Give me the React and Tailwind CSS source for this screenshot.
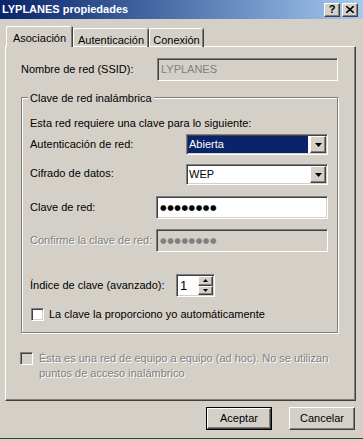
const raised =
  "border border-t-white border-l-white border-r-[#404040] border-b-[#404040] shadow-[inset_-1px_-1px_0_#808080]";
const sunken =
  "border border-t-[#808080] border-l-[#808080] border-r-white border-b-white shadow-[inset_1px_1px_0_#404040,inset_-1px_-1px_0_#d4d0c8]";
const etched = "border border-[#808080] shadow-[inset_1px_1px_0_white,1px_1px_0_white]";
const disabledText = "text-[#808080] [text-shadow:1px_1px_0_white]";

const DownArrow = () => (
  <svg width="7" height="4" viewBox="0 0 7 4">
    <path d="M0 0h7L3.5 4z" fill="black" />
  </svg>
);

const Combo = ({ value, selected }) => (
  <div className={`flex h-[21px] w-[142px] items-stretch bg-white ${sunken}`}>
    <div className="flex flex-1 items-center p-[1px]">
      <span
        className={`flex h-full w-full items-center px-[1px] ${
          selected ? "bg-[#0a246a] text-white" : "text-black"
        }`}
      >
        {value}
      </span>
    </div>
    <div className={`m-[1px] flex w-[16px] items-center justify-center bg-[#d4d0c8] ${raised}`}>
      <DownArrow />
    </div>
  </div>
);

const Field = ({ children, disabled, width = "w-[172px]" }) => (
  <div
    className={`flex h-[23px] ${width} items-center px-[3px] ${sunken} ${
      disabled ? "bg-[#d4d0c8] text-[#808080]" : "bg-white text-black"
    }`}
  >
    {children}
  </div>
);

const Dots = ({ light }) => (
  <span
    className={`text-[7.5px] tracking-[0.6px] font-['DejaVu_Sans',sans-serif] ${
      light ? "text-[#808080]" : "text-black"
    }`}
  >
    ●●●●●●●●
  </span>
);

const Checkbox = ({ disabled }) => (
  <div
    className={`h-[13px] w-[13px] shrink-0 ${sunken} ${disabled ? "bg-[#d4d0c8]" : "bg-white"}`}
  />
);

const Button = ({ children, isDefault }) =>
  isDefault ? (
    <div className="h-[23px] w-[66px] border border-black">
      <div className={`flex h-full w-full items-center justify-center bg-[#d4d0c8] ${raised}`}>
        {children}
      </div>
    </div>
  ) : (
    <div className={`flex h-[23px] w-[66px] items-center justify-center bg-[#d4d0c8] ${raised}`}>
      {children}
    </div>
  );

const CaptionButton = ({ children }) => (
  <div
    className={`flex h-[14px] w-[16px] items-center justify-center bg-[#d4d0c8] text-[11px] font-bold leading-none text-black ${raised}`}
  >
    {children}
  </div>
);

export default function App() {
  return (
    <div className="relative h-[441px] w-[363px] overflow-hidden bg-[#d4d0c8] font-['Liberation_Sans',Arial,sans-serif] text-[11px] text-black">
      {/* title bar */}
      <div className="flex h-[19px] items-center justify-between bg-gradient-to-r from-[#0a246a] to-[#a6caf0] pl-[2px] pr-[5px]">
        <span className="text-[11px] font-bold text-white">LYPLANES propiedades</span>
        <div className="flex gap-[2px]">
          <CaptionButton>?</CaptionButton>
          <CaptionButton>
            <svg width="8" height="7" viewBox="0 0 8 7">
              <path d="M0 0l8 7M8 0L0 7" stroke="black" strokeWidth="1.6" />
            </svg>
          </CaptionButton>
        </div>
      </div>

      {/* tabs */}
      <div className="relative z-10 ml-[6px] mt-[7px] flex h-[21px] items-end">
        <div className="flex h-[21px] w-[66px] items-start justify-center rounded-t-[2px] border-l border-t border-white bg-[#d4d0c8] pt-[3px] shadow-[inset_-1px_0_0_#808080,1px_0_0_#404040]">
          Asociación
        </div>
        <div className="ml-[1px] flex h-[19px] w-[75px] items-start justify-center rounded-t-[2px] border-l border-t border-white pt-[3px] shadow-[inset_-1px_0_0_#808080,1px_0_0_#404040]">
          Autenticación
        </div>
        <div className="ml-[1px] flex h-[19px] w-[54px] items-start justify-center rounded-t-[2px] border-l border-t border-white pt-[3px] shadow-[inset_-1px_0_0_#808080,1px_0_0_#404040]">
          Conexión
        </div>
      </div>

      {/* panel */}
      <div className="-mt-[1px] ml-[5px] h-[355px] w-[351px] border-l border-t border-white border-r border-b border-r-[#404040] border-b-[#404040] shadow-[inset_-1px_-1px_0_#808080]">
        <div className="ml-[15px] mt-[11px] flex h-[23px] items-center">
          <span className="w-[136px]">Nombre de red (SSID):</span>
          <Field disabled width="w-[181px]">
            <span className="text-[#808080]">LYPLANES</span>
          </Field>
        </div>

        <div className={`relative ml-[15px] mt-[16px] h-[236px] w-[317px] ${etched}`}>
          <span className="absolute -top-[8px] left-[6px] bg-[#d4d0c8] px-[2px]">
            Clave de red inalámbrica
          </span>
          <div className="pl-[8px] pr-[8px]">
            <div className="mt-[17px] h-[14px]">Esta red requiere una clave para lo siguiente:</div>
            <div className="mt-[5px] flex h-[21px] items-center">
              <span className="w-[156px]">Autenticación de red:</span>
              <Combo value="Abierta" selected />
            </div>
            <div className="mt-[9px] flex h-[21px] items-start">
              <span className="w-[156px] pt-[1px]">Cifrado de datos:</span>
              <Combo value="WEP" />
            </div>
            <div className="mt-[11px] flex h-[23px] items-center">
              <span className="w-[126px]">Clave de red:</span>
              <Field>
                <Dots />
              </Field>
            </div>
            <div className="mt-[10px] flex h-[23px] items-center">
              <span className={`w-[126px] ${disabledText}`}>Confirme la clave de red:</span>
              <Field disabled>
                <Dots light />
              </Field>
            </div>
            <div className="mt-[22px] flex h-[23px] items-center">
              <span className="w-[146px]">Índice de clave (avanzado):</span>
              <div className={`flex h-[23px] w-[39px] bg-white ${sunken}`}>
                <span className="flex flex-1 items-center pl-[3px] text-[13px]">1</span>
                <div className="m-[1px] flex w-[15px] flex-col">
                  <div className={`flex flex-1 items-center justify-center bg-[#d4d0c8] ${raised}`}>
                    <svg width="5" height="3" viewBox="0 0 5 3">
                      <path d="M0 3h5L2.5 0z" fill="black" />
                    </svg>
                  </div>
                  <div className={`flex flex-1 items-center justify-center bg-[#d4d0c8] ${raised}`}>
                    <svg width="5" height="3" viewBox="0 0 5 3">
                      <path d="M0 0h5L2.5 3z" fill="black" />
                    </svg>
                  </div>
                </div>
              </div>
            </div>
            <div className="mt-[9px] flex items-center gap-[5px] pl-[1px]">
              <Checkbox />
              <span>La clave la proporciono yo automáticamente</span>
            </div>
          </div>
        </div>

        <div className={`ml-[14px] mt-[18px] flex gap-[6px] ${disabledText}`}>
          <div className="pt-[1px]">
            <Checkbox disabled />
          </div>
          <p className="leading-[15px]">
            Ésta es una red de equipo a equipo (ad hoc). No se utilizan
            <br />
            puntos de acceso inalámbrico
          </p>
        </div>
      </div>

      {/* buttons */}
      <div className="mt-[6px] flex justify-end gap-[17px] pr-[8px]">
        <Button isDefault>Aceptar</Button>
        <Button>Cancelar</Button>
      </div>

      <div className="absolute bottom-[2px] left-0 h-[1px] w-full bg-[#404040]" />
    </div>
  );
}
